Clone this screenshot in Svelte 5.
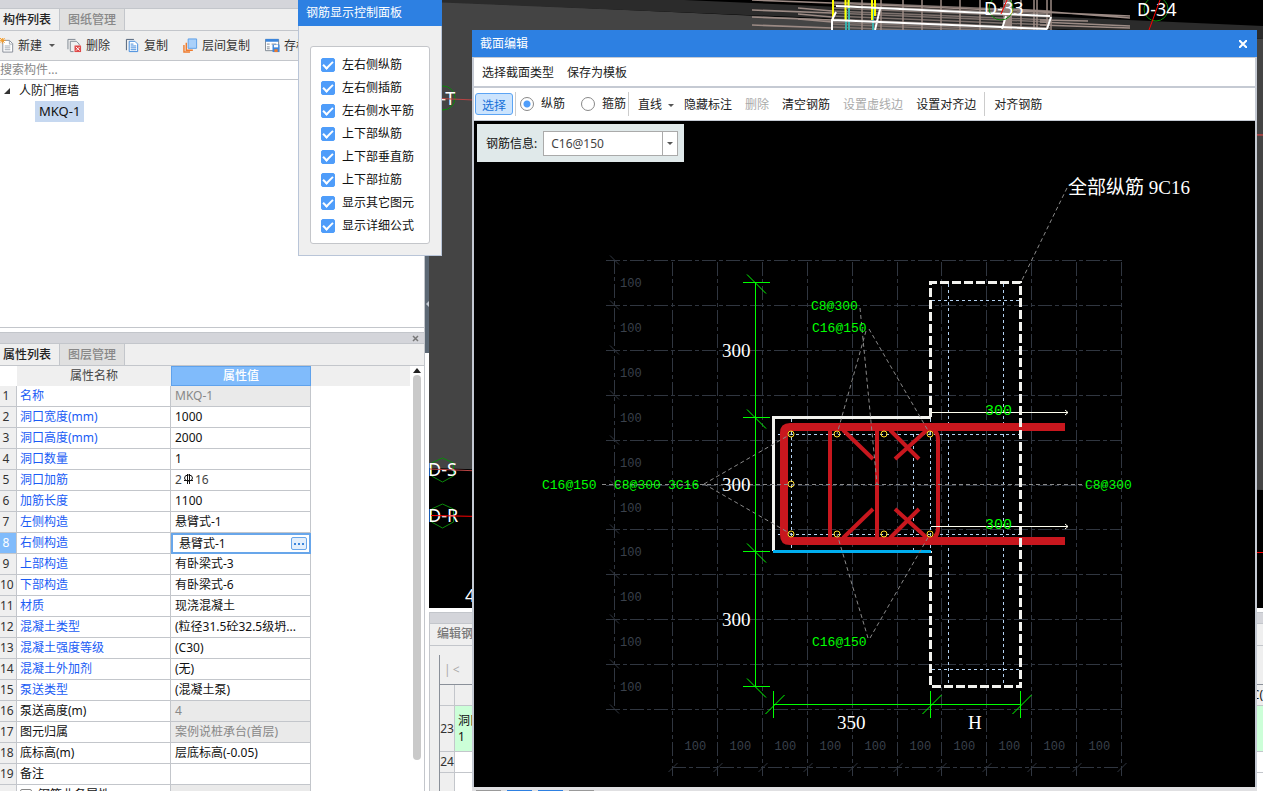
<script>
	const tools = ["删除", "复制", "层间复制", "存档"];

	let options = $state([
		{ label: "左右侧纵筋", on: true },
		{ label: "左右侧插筋", on: true },
		{ label: "左右侧水平筋", on: true },
		{ label: "上下部纵筋", on: true },
		{ label: "上下部垂直筋", on: true },
		{ label: "上下部拉筋", on: true },
		{ label: "显示其它图元", on: true },
		{ label: "显示详细公式", on: true },
	]);

	const rows = [
		{ name: "名称", value: "MKQ-1", link: true, locked: true },
		{ name: "洞口宽度(mm)", value: "1000", link: true },
		{ name: "洞口高度(mm)", value: "2000", link: true },
		{ name: "洞口数量", value: "1", link: true },
		{ name: "洞口加筋", value: "2", after: "16", link: true },
		{ name: "加筋长度", value: "1100", link: true },
		{ name: "左侧构造", value: "悬臂式-1", link: true },
		{ name: "右侧构造", value: "悬臂式-1", link: true, editing: true },
		{ name: "上部构造", value: "有卧梁式-3", link: true },
		{ name: "下部构造", value: "有卧梁式-6", link: true },
		{ name: "材质", value: "现浇混凝土", link: true },
		{ name: "混凝土类型", value: "(粒径31.5砼32.5级坍...", link: true },
		{ name: "混凝土强度等级", value: "(C30)", link: true },
		{ name: "混凝土外加剂", value: "(无)", link: true },
		{ name: "泵送类型", value: "(混凝土泵)", link: true },
		{ name: "泵送高度(m)", value: "4", locked: true },
		{ name: "图元归属", value: "案例说桩承台(首层)", locked: true },
		{ name: "底标高(m)", value: "层底标高(-0.05)" },
		{ name: "备注", value: "" },
	];

	let barType = $state("long");
	let barInfo = $state("C16@150");

	// 100mm grid of the section canvas
	const step = 44.9;
	const at = (start, i) => Math.round(start + i * step) + 0.5;
	const gridX = Array.from({ length: 11 }, (_, i) => at(672, i));
	const gridY = Array.from({ length: 11 }, (_, i) => at(260, i));

	const dimY = [282.5, 417.5, 551.5, 686.5];
	const dimX = [773.5, 930.5, 1020.5];

	const bars = [
		[791, 434], [837, 434], [884, 434], [930, 434],
		[791, 484],
		[791, 534], [837, 534], [884, 534], [930, 534],
	];

	const leaders = [
		[704, 484, 791, 434],
		[704, 484, 791, 534],
		[860, 308, 877, 484],
		[866, 331, 837, 434],
		[869, 329, 930, 434],
		[868, 638, 837, 534],
		[870, 638, 930, 534],
		[1067, 188, 1021, 282],
	];

	const mesh = [0, 8, 10, 14, 17, 19, 25];
	const inner = [2, 5, 8, 11, 13, 16, 19, 22, 24, 27];
	const posts = [862, 881, 903, 922, 941, 960, 980, 1004, 1007, 1010, 1021, 1034, 1037, 1047, 1051];
</script>

{#snippet icon(name)}
	<svg class="icon" viewBox="0 0 16 16" aria-hidden="true">
		{#if name === "新建"}
			<path d="M3 2.5h7l3.500 3.500v9h-10.500z" fill="#fff" stroke="#848b96" />
			<path d="M10 2.500v4h4M5 8.500h6M5 10.500h6M5 12.500h6" fill="none" stroke="#9ea5af" />
			<path d="M0 0l5 5M5 0L0 5M2.500 0v6M0 2.500h6" stroke="#f59a23" />
		{:else if name === "删除"}
			<path d="M1 12V1.500h8M3.500 14V3.500h6.500l3 3V8M7 14.500H3.500" fill="none" stroke="#7c8590" />
			<path d="M8 8h7v7H8z" fill="#e04848" />
			<path d="M9.500 9.500l4 4M13.500 9.500l-4 4" stroke="#fff" />
		{:else if name === "复制"}
			<path d="M1.500 13V1.500h8" fill="none" stroke="#4a5c74" />
			<path d="M4.500 3.500h6l3 3v8h-9z" fill="#fff" stroke="#3c86dc" />
			<path d="M6 6.500h3M6 8.500h6M6 10.500h6M6 12.500h6" stroke="#3c86dc" />
		{:else if name === "层间复制"}
			<path d="M5.500 1h9v10h-9z" fill="#a9d0fa" stroke="#5b9ee8" />
			<path d="M3.500 5v8h7M1 7.500V15h6.500" fill="none" stroke="#ef7b2d" stroke-width="1.500" />
		{:else}
			<path d="M.5 1.500h14v12H.5z" fill="#fff" stroke="#7c8590" />
			<path d="M.5 1h14v3H.5z" fill="#3c86dc" />
			<path d="M2 6.500h3M7 6.500h5M2 9.500h3M2 11.500h3" stroke="#7c8590" />
			<path d="M8 7h7.500v8H8z" fill="#3c86dc" />
			<path d="M9.500 7.500h4.500v2.500H9.500z" fill="#fff" />
			<path d="M10 12h3.500v3H10z" fill="#ef7b2d" />
		{/if}
	</svg>
{/snippet}

<div class="app">
	<aside>
		<section class="components">
			<div class="strip"></div>
			<nav class="tabs">
				<button class="active">构件列表</button>
				<button>图纸管理</button>
			</nav>
			<div class="toolbar">
				<button class="split">{@render icon("新建")}新建<i class="caret"></i></button>
				{#each tools as tool}
					<button>{@render icon(tool)}{tool}</button>
				{/each}
			</div>
			<input class="search" type="text" placeholder="搜索构件..." aria-label="搜索构件" />
			<ul class="tree">
				<li>
					<svg viewBox="0 0 6 6" aria-hidden="true"><path d="M6 0v6H0z" fill="#333" /></svg>
					人防门框墙
				</li>
				<li><span class="selected">MKQ-1</span></li>
			</ul>
		</section>

		<section class="properties">
			<div class="strip">
				<button aria-label="关闭">
					<svg viewBox="0 0 7 7" aria-hidden="true"><path d="M1 1l5 5M6 1L1 6" stroke="#777" stroke-width="1.500" /></svg>
				</button>
			</div>
			<nav class="tabs">
				<button class="active">属性列表</button>
				<button>图层管理</button>
			</nav>
			<div class="sheet">
				<table>
					<thead>
						<tr><th class="no"></th><th class="name">属性名称</th><th class="value">属性值</th><th></th></tr>
					</thead>
					<tbody>
						{#each rows as row, i}
							<tr class:current={row.editing}>
								<td class="no">{i + 1}</td>
								<td class="name" class:link={row.link}>{row.name}</td>
								<td class="value" class:locked={row.locked}>
									{#if row.editing}
										<div class="editor">
											<input type="text" value={row.value} aria-label={row.name} />
											<button aria-label="更多"><i></i><i></i><i></i></button>
										</div>
									{:else if row.after}
										<span class="rebar">
											{row.value}
											<svg viewBox="0 0 11 12" aria-hidden="true">
												<path d="M4.500 1v10M6.500 1v10M1 7.500h9" stroke="#111" fill="none" />
												<ellipse cx="5.500" cy="5" rx="4" ry="3" stroke="#111" fill="none" />
											</svg>
											{row.after}
										</span>
									{:else}
										{row.value}
									{/if}
								</td>
								<td></td>
							</tr>
						{/each}
						<tr>
							<td class="no"></td>
							<td class="name"><span class="group"><i></i>钢筋业务属性</span></td>
							<td class="value locked"></td>
							<td></td>
						</tr>
					</tbody>
				</table>
				<div class="scroll">
					<svg viewBox="0 0 8 5" aria-hidden="true"><path d="M0 5l4-5 4 5z" fill="#222" /></svg>
					<div class="thumb"></div>
				</div>
			</div>
		</section>
	</aside>

	<div class="splitter"><i></i></div>

	<main>
		<svg class="scene" viewBox="429 0 834 608" preserveAspectRatio="xMinYMin slice">
			<path d="M429 0h834v608H429z" fill="#000" />
			<path d="M429 1L1263 39V490L429 468z" fill="#444" />
			<path d="M429 0h255L1263 26V39L870 20 429 2z" fill="#2b2b2b" />
			<g stroke="#7d716d" stroke-width="1.500">
				{#each inner as y}
					<path d="M832 {y}L1050 {y + 9}" />
				{/each}
			</g>
			<g stroke="#9c8b85" stroke-width="1.500">
				{#each mesh as y, i}
					<path d="M{752 + (i % 2) * 46} {y}L832 {y + 3}" />
				{/each}
				<path d="M832 3L1130 16M1000 8L1130 18M1040 20l48 1M1040 22l90 4M1040 25l90 3" />
				{#each posts as x}
					<path d="M{x} 0v30" />
				{/each}
			</g>
			<path d="M1005 0h7v30h-7z" fill="#95857f" />
			<path d="M846 10v20M849 0v30M873 8v22" stroke="#3bb0ac" stroke-width="2" />
			<path d="M833 0v20M845.500 0v20M848.500 0v8M872 0v20M875 0v16" stroke="#ff0" stroke-width="2" />
			<path d="M832 20L1047 29M836 6L1050 16M832 30V20l4-8M875 30l5-21M1002 29l4-13M1047 29l4-12" fill="none" stroke="#fff" stroke-width="2" />
			<g fill="none" stroke="#0a8a0a">
				<circle cx="1001" cy="8" r="12" />
				<circle cx="1156" cy="9" r="12" />
				<circle cx="443" cy="98" r="12" />
				<path d="M442.500 458l11 5v13l-11 6-11-6v-13zM442.500 504l11 5v13l-11 6-11-6v-13z" />
			</g>
			<g class="axis">
				<text x="984" y="15">D-33</text>
				<text x="1137" y="16">D-34</text>
				<text x="427" y="105">D-T</text>
				<text x="428" y="476">D-S</text>
				<text x="428" y="522">D-R</text>
				<text x="465" y="602">4</text>
			</g>
			<path d="M429 98l834 37M430 469l50 2M1256 135h7" fill="none" stroke="#b94444" />
			<path d="M431 515.500l50 1M1250 552.500h13M1160 0l-11 30M1007 0l-6 14" fill="none" stroke="#f00" />
		</svg>

		<section class="bottom">
			<div class="strip"></div>
			<div class="tab">编辑钢筋</div>
			<div class="record">
				<div class="pager">|<span>&lt;</span></div>
				<table>
					<tbody>
						<tr class="head"><td class="no"></td><td class="right">C(</td></tr>
						<tr class="mark"><td class="no">23</td><td>洞口<br />1</td></tr>
						<tr><td class="no">24</td><td></td></tr>
						<tr><td class="no"></td><td></td></tr>
					</tbody>
				</table>
			</div>
		</section>
	</main>

	<div class="window display">
		<header>钢筋显示控制面板</header>
		<div class="box">
			{#each options as option}
				<label><input type="checkbox" bind:checked={option.on} />{option.label}</label>
			{/each}
		</div>
	</div>

	<div class="window editor-window">
		<header>
			截面编辑
			<button aria-label="关闭">
				<svg viewBox="0 0 8 8" aria-hidden="true"><path d="M0 0l8 8M8 0L0 8" stroke="#fff" stroke-width="2" /></svg>
			</button>
		</header>
		<div class="bar menu">
			<button>选择截面类型</button>
			<button>保存为模板</button>
		</div>
		<div class="bar actions">
			<button class="picked">选择</button>
			<hr />
			<label><input type="radio" name="bar" value="long" bind:group={barType} />纵筋</label>
			<label><input type="radio" name="bar" value="hoop" bind:group={barType} />箍筋</label>
			<hr />
			<button class="drop">直线<i class="caret"></i></button>
			<button>隐藏标注</button>
			<button disabled>删除</button>
			<button>清空钢筋</button>
			<button disabled>设置虚线边</button>
			<button>设置对齐边</button>
			<hr />
			<button>对齐钢筋</button>
		</div>

		<div class="canvas">
			<svg viewBox="474 121 781 666" preserveAspectRatio="xMinYMin meet">
				<!-- grid -->
				<g class="grid">
					{#each gridX as x}
						<path d="M{x} 262V776" />
					{/each}
					{#each gridY as y}
						<path d="M606 {y}H1122" />
					{/each}
					<path d="M614.500 260V709M672 767.500H1122" />
				</g>
				<g class="ticks">
					{#each gridY as y}
						<path d="M610 {y - 5}l9 9" />
					{/each}
					{#each gridX as x}
						<path d="M{x - 4} 772l9-9" />
					{/each}
				</g>
				<g class="scale">
					{#each gridY.slice(0, 10) as y}
						<text x="620" y={y + 26}>100</text>
					{/each}
					{#each gridX.slice(0, 10) as x}
						<text x={x + 12} y="750">100</text>
					{/each}
				</g>

				<path class="edge" d="M931 417.500H773.500V551" />
				<path class="cover" d="M778 434.500H1021M778 534.500H1021M791.500 419V550M913.500 434V550M930.500 419V551M948.500 284V685M1003.500 284V685M932 300.500H1020M932 669.500H1020" />

				<!-- stirrups -->
				<g class="steel">
					<path class="thick" d="M1065 427H790Q784 427 784 433V535Q784 541 790 541H1065" />
					<path d="M830 430V538M877 430V538M926 428Q938 428 938 440V528Q938 540 926 540" />
					<path d="M843 430L873 459M890 430L919 459M927 430L895 459M843 538L873 509M890 538L919 509M927 538L895 509" />
				</g>

				<!-- concrete outline -->
				<path class="edge dashed" d="M930.500 417V282.500H1020.500V686.500H930.500V551" />
				<path class="base" d="M773 551.500H931" />

				{#each bars as [x, y]}
					<circle class="bar-dot" cx={x} cy={y} r="3" />
				{/each}

				<g class="leader">
					<path d="M602 484.500H1085" />
					{#each leaders as [x1, y1, x2, y2]}
						<line {x1} {y1} {x2} {y2} />
					{/each}
				</g>

				<!-- dimensions -->
				<g class="dim">
					<path d="M755.500 282V686M773 704.500H1021" />
					{#each dimY as y}
						<path d="M743 {y}h27M747 {y - 8}l19 19" />
					{/each}
					{#each dimX as x}
						<path d="M{x} 691v27M{x - 8} 714l19-19" />
					{/each}
				</g>
				<path class="length" d="M931 412.500H1068M931 526.500H1068M1065 410l3 2.500-3 2.500M1065 524l3 2.500-3 2.500" />

				<g class="size">
					<text x="722" y="357">300</text>
					<text x="722" y="491">300</text>
					<text x="722" y="626">300</text>
					<text x="837" y="729">350</text>
					<text x="968" y="729">H</text>
					<text x="1068" y="194">全部纵筋 9C16</text>
				</g>
				<g class="note">
					<text x="811" y="310">C8@300</text>
					<text x="812" y="332">C16@150</text>
					<text x="812" y="646">C16@150</text>
					<text x="542" y="489">C16@150</text>
					<text x="614" y="489">C8@300</text>
					<text x="668" y="489">3C16</text>
					<text x="1085" y="489">C8@300</text>
					<text class="big" x="985" y="415">300</text>
					<text class="big" x="985" y="529">300</text>
				</g>
			</svg>
			<div class="info">
				<label for="info">钢筋信息:</label>
				<div class="combo">
					<input id="info" type="text" bind:value={barInfo} />
					<button aria-label="展开"><i class="caret"></i></button>
				</div>
			</div>
		</div>
		<footer><i></i><i class="on"></i><i class="on"></i><i></i></footer>
	</div>
</div>

<style>
	:global(body) {
		margin: 0;
	}

	.app {
		--line: #c3c6cb;
		--blue: #2d80e2;
		position: relative;
		display: flex;
		height: 100vh;
		overflow: hidden;
		background: #fff;
		color: #111;
		font-family: "Noto Sans", "Noto Sans CJK SC", sans-serif;
		font-size: 12px;
		line-height: 20px;
	}

	* {
		box-sizing: border-box;
	}

	button,
	input {
		font: inherit;
		color: inherit;
		margin: 0;
		padding: 0;
		border: 0;
		background: none;
		white-space: nowrap;
	}

	.caret {
		border: 3px solid transparent;
		border-top-color: #555;
		border-bottom-width: 0;
	}

	aside {
		display: flex;
		flex-direction: column;
		gap: 4px;
		width: 425px;
		flex: none;
		border-right: 1px solid var(--line);
	}

	.components {
		display: flex;
		flex-direction: column;
		flex: 0 0 328px;
		border-bottom: 1px solid var(--line);
	}

	.strip {
		display: flex;
		justify-content: flex-end;
		align-items: center;
		height: 9px;
		background: #d4d5da;
		border-bottom: 1px solid var(--line);
	}

	.strip button {
		display: flex;
		padding-right: 5px;
	}

	.strip svg {
		width: 7px;
		height: 7px;
	}

	.properties .strip {
		height: 12px;
		border-top: 1px solid var(--line);
	}

	.tabs {
		display: flex;
		height: 22px;
		background: #efefef;
		border-bottom: 1px solid var(--line);
	}

	.tabs button {
		padding: 0 8px;
		background: #e0e0e0;
		color: #888;
		font-weight: 500;
		border-right: 1px solid var(--line);
	}

	.tabs button.active {
		padding: 0 8px 0 3px;
		background: #efefef;
		color: #222;
	}

	.toolbar {
		display: flex;
		gap: 12px;
		height: 30px;
		background: #efefef;
		border-bottom: 1px solid var(--line);
		color: #333;
	}

	.toolbar button {
		display: flex;
		align-items: center;
		gap: 4px;
		padding-right: 3px;
	}

	.toolbar .split {
		gap: 3px;
		padding: 0;
	}

	.split .caret {
		margin-left: 4px;
	}

	.icon {
		width: 15px;
		height: 15px;
	}

	.search {
		height: 19px;
		border-bottom: 1px solid var(--line);
		outline: none;
	}

	.search::placeholder {
		color: #888;
		opacity: 1;
	}

	.tree {
		margin: 0;
		padding: 0;
		list-style: none;
	}

	.tree li {
		display: flex;
		align-items: center;
		gap: 9px;
		height: 21px;
		padding-left: 4px;
	}

	.tree svg {
		width: 6px;
		height: 6px;
	}

	.selected {
		margin-left: 31px;
		padding: 0 4px;
		background: #c6d8f0;
		font-size: 13px;
		line-height: 21px;
	}

	.properties {
		flex: 1;
		min-height: 0;
		overflow: hidden;
	}

	.sheet {
		display: flex;
		align-items: flex-start;
	}

	table {
		table-layout: fixed;
		border-spacing: 0;
		width: 100%;
	}

	th,
	td {
		padding: 0;
		height: 21px;
		font-weight: 400;
		white-space: nowrap;
	}

	th {
		height: 20px;
		background: #efefef;
		color: #444;
		line-height: 18px;
	}

	th.no {
		width: 17px;
		background: #fff;
	}

	th.name {
		width: 154px;
	}

	th.value {
		width: 140px;
		background: #80bbfb;
		border: 1px solid #5fa2ec;
		color: #fff;
		font-weight: 500;
	}

	td.no,
	td.name,
	td.value {
		border-right: 1px solid var(--line);
		border-bottom: 1px solid var(--line);
	}

	td.no {
		padding-right: 4px;
		background: #efefef;
		color: #333;
		text-align: center;
	}

	td.name,
	td.value {
		padding-left: 3px;
	}

	td.value {
		padding-left: 4px;
	}

	td.link {
		color: #1a5cf5;
	}

	td.locked {
		background: #eaeaea;
		color: #888;
	}

	.current td.no {
		background: #80bbfb;
		color: #fff;
	}

	.current td.value {
		padding: 0;
		border: 0;
	}

	.editor {
		display: flex;
		align-items: center;
		height: 21px;
		padding: 0 2px 0 6px;
		border: 2px solid #68a6ea;
		line-height: 16px;
	}

	.editor input {
		flex: 1;
		width: 0;
		outline: none;
	}

	.editor button {
		display: flex;
		justify-content: center;
		align-items: center;
		gap: 2px;
		width: 16px;
		height: 13px;
		border: 1px solid #68a6ea;
		border-radius: 2px;
		background: #e3effc;
	}

	.editor button i {
		width: 2px;
		height: 2px;
		background: #3c86dc;
	}

	.rebar {
		display: flex;
		gap: 1px;
		height: 20px;
		color: #444;
	}

	.rebar svg {
		width: 11px;
		height: 12px;
		margin-top: 3px;
	}

	.group {
		display: flex;
		align-items: center;
		gap: 6px;
	}

	.group i {
		width: 12px;
		height: 12px;
		border: 1px solid #888;
		border-radius: 2px;
	}

	.scroll {
		display: flex;
		flex-direction: column;
		align-items: center;
		gap: 2px;
		width: 14px;
		flex: none;
		padding-top: 2px;
	}

	.scroll svg {
		width: 8px;
		height: 5px;
	}

	.thumb {
		width: 8px;
		height: 385px;
		border-radius: 4px;
		background: #c9c9c9;
	}

	.splitter {
		display: flex;
		align-items: center;
		justify-content: flex-end;
		width: 4px;
		height: 353px;
		flex: none;
		background: #5c6874;
	}

	.splitter i {
		border: 3px solid transparent;
		border-right-color: #c5ccd4;
		border-left-width: 0;
		margin-top: 254px;
	}

	main {
		display: flex;
		flex-direction: column;
		flex: 1;
		min-width: 0;
	}

	.scene {
		flex: 1;
		min-height: 0;
		margin-bottom: 4px;
	}

	.axis {
		fill: #fff;
		font-size: 18px;
	}

	.bottom {
		display: flex;
		flex-direction: column;
		flex: 0 0 179px;
		min-height: 0;
		overflow: hidden;
		background: #efefef;
		border-left: 1px solid var(--line);
	}

	.bottom .strip {
		flex: none;
		height: 12px;
		border-top: 1px solid var(--line);
	}

	.tab {
		flex: none;
		height: 22px;
		padding-left: 7px;
		border-bottom: 1px solid var(--line);
		color: #777;
		font-weight: 500;
	}

	.record {
		flex: none;
		margin: 9px 0 0 9px;
		border-left: 1px solid #8a9099;
	}

	.record table {
		border-top: 1px solid #8a9099;
	}

	.pager {
		height: 29px;
		padding: 5px 4px;
		color: #aaa;
	}

	.pager span {
		margin-left: 2px;
	}

	.record td {
		padding-left: 3px;
		border-bottom: 1px solid var(--line);
		background: #fff;
		line-height: 16px;
	}

	.record td.no {
		width: 15px;
		padding: 0;
	}

	.record td.no,
	.record .head td {
		background: #efefef;
	}

	.record td.right {
		text-align: right;
	}

	.record .mark td {
		height: 46px;
	}

	.record .mark td:last-child {
		background: #ccffd8;
	}

	.window {
		position: absolute;
		display: flex;
		flex-direction: column;
	}

	.window header {
		display: flex;
		align-items: center;
		justify-content: space-between;
		height: 27px;
		padding: 0 8px;
		background: var(--blue);
		color: #fff;
		flex: none;
	}

	.display {
		top: 0;
		left: 298px;
		width: 144px;
		background: #efefef;
	}

	.display header {
		height: 26px;
	}

	.box {
		margin: 20px 12px 12px;
		padding: 6px 10px;
		background: #fff;
		border: 1px solid #c4c6ca;
		border-radius: 3px;
	}

	.display::after {
		content: "";
		position: absolute;
		inset: 26px 0 0;
		border: 1px solid #b9c5d8;
		border-top: 0;
		pointer-events: none;
	}

	.box label {
		display: flex;
		align-items: center;
		gap: 7px;
		height: 23px;
	}

	.box input {
		appearance: none;
		display: flex;
		justify-content: center;
		width: 14px;
		height: 14px;
		border: 1px solid #4f9dfa;
		border-radius: 2px;
	}

	.box input:checked {
		background: #4f9dfa;
	}

	.box input:checked::after {
		content: "";
		width: 4px;
		height: 8px;
		border: solid #fff;
		border-width: 0 2px 2px 0;
		transform: rotate(45deg);
	}

	.editor-window {
		top: 30px;
		right: 6px;
		bottom: 0;
		left: 472px;
		background: #fff;
	}

	.editor-window header svg {
		display: block;
		width: 8px;
		height: 8px;
		margin-right: 2px;
	}

	.bar {
		display: flex;
		align-items: center;
		gap: 1px;
		padding: 0 2px;
		border: solid #c5cad3;
		border-width: 1px 2px 0;
		color: #222;
	}

	.bar button {
		height: 22px;
		padding: 2px 6px 0;
		border-radius: 3px;
		line-height: 20px;
	}

	.bar button:disabled {
		color: #aaa;
	}

	.menu {
		height: 29px;
	}

	.actions {
		height: 35px;
		padding-left: 1px;
		border-top-width: 2px;
		border-bottom-width: 1px;
	}

	.actions hr {
		width: 1px;
		height: 24px;
		margin: 0 2px 0 1px;
		border: 0;
		background: #ccc;
	}

	.bar .picked {
		border: 1px solid #5ba4f4;
		background: #cce4fd;
		color: #1670d8;
	}

	.actions label {
		display: flex;
		align-items: center;
		gap: 7px;
		padding: 0 0 0 1px;
	}

	.actions label + label {
		margin-left: 14px;
	}

	.actions label input {
		appearance: none;
		width: 14px;
		height: 14px;
		border: 1px solid #888;
		border-radius: 50%;
		background: #fff;
	}

	.actions label input:checked {
		background: radial-gradient(#4f9dfa 3px, #fff 4px);
	}

	.bar .drop {
		display: flex;
		align-items: center;
		gap: 6px;
		padding-right: 3px;
	}

	.canvas {
		position: relative;
		flex: 1;
		min-height: 0;
		overflow: hidden;
		border: solid #c5cad3;
		border-width: 0 2px;
		background: #000;
	}

	.canvas > svg {
		display: block;
		width: 100%;
	}

	.info {
		position: absolute;
		top: 3px;
		left: 3px;
		display: flex;
		align-items: center;
		gap: 6px;
		padding: 7px 6px 6px 9px;
		background: #e0e9ea;
	}

	.combo {
		display: flex;
		width: 135px;
		height: 25px;
		border: 1px solid #aaa;
		background: #fff;
	}

	.combo input {
		flex: 1;
		width: 0;
		padding-left: 7px;
		color: #444;
		outline: none;
	}

	.combo button {
		display: flex;
		align-items: center;
		justify-content: center;
		width: 15px;
		border-left: 1px solid #aaa;
	}

	footer {
		display: flex;
		align-items: flex-end;
		gap: 6px;
		height: 4px;
		flex: none;
		padding-left: 4px;
		background: #e0e0e2;
	}

	footer i {
		width: 25px;
		height: 1px;
		background: #999;
	}

	footer .on {
		background: var(--blue);
	}

	.canvas path,
	.canvas line,
	.canvas circle {
		fill: none;
	}

	.grid {
		stroke: #303640;
		stroke-dasharray: 14 3 4 3;
	}

	.ticks {
		stroke: #303640;
	}

	.scale {
		fill: #3a414c;
		font: 12px "Liberation Mono", monospace;
	}

	.edge {
		stroke: #f2f2ee;
		stroke-width: 3;
	}

	.dashed {
		stroke-dasharray: 9 3;
	}

	.cover {
		stroke: #b4d2f2;
		stroke-dasharray: 3 3;
	}

	.steel {
		stroke: #c8171e;
		stroke-width: 4;
	}

	.steel .thick {
		stroke-width: 8;
	}

	.base {
		stroke: #00aeef;
		stroke-width: 3;
	}

	.bar-dot {
		stroke: #ffdc28;
	}

	.leader {
		stroke: #8a8a8a;
		stroke-dasharray: 4 3;
	}

	.dim {
		stroke: #0f0;
	}

	.length {
		stroke: #fffff0;
	}

	.size {
		fill: #fff;
		font: 19px "Liberation Serif", "Noto Sans CJK SC", serif;
	}

	.note {
		fill: #0f0;
		font: 13px "Liberation Mono", monospace;
	}

	.note .big {
		font-size: 15px;
	}
</style>
